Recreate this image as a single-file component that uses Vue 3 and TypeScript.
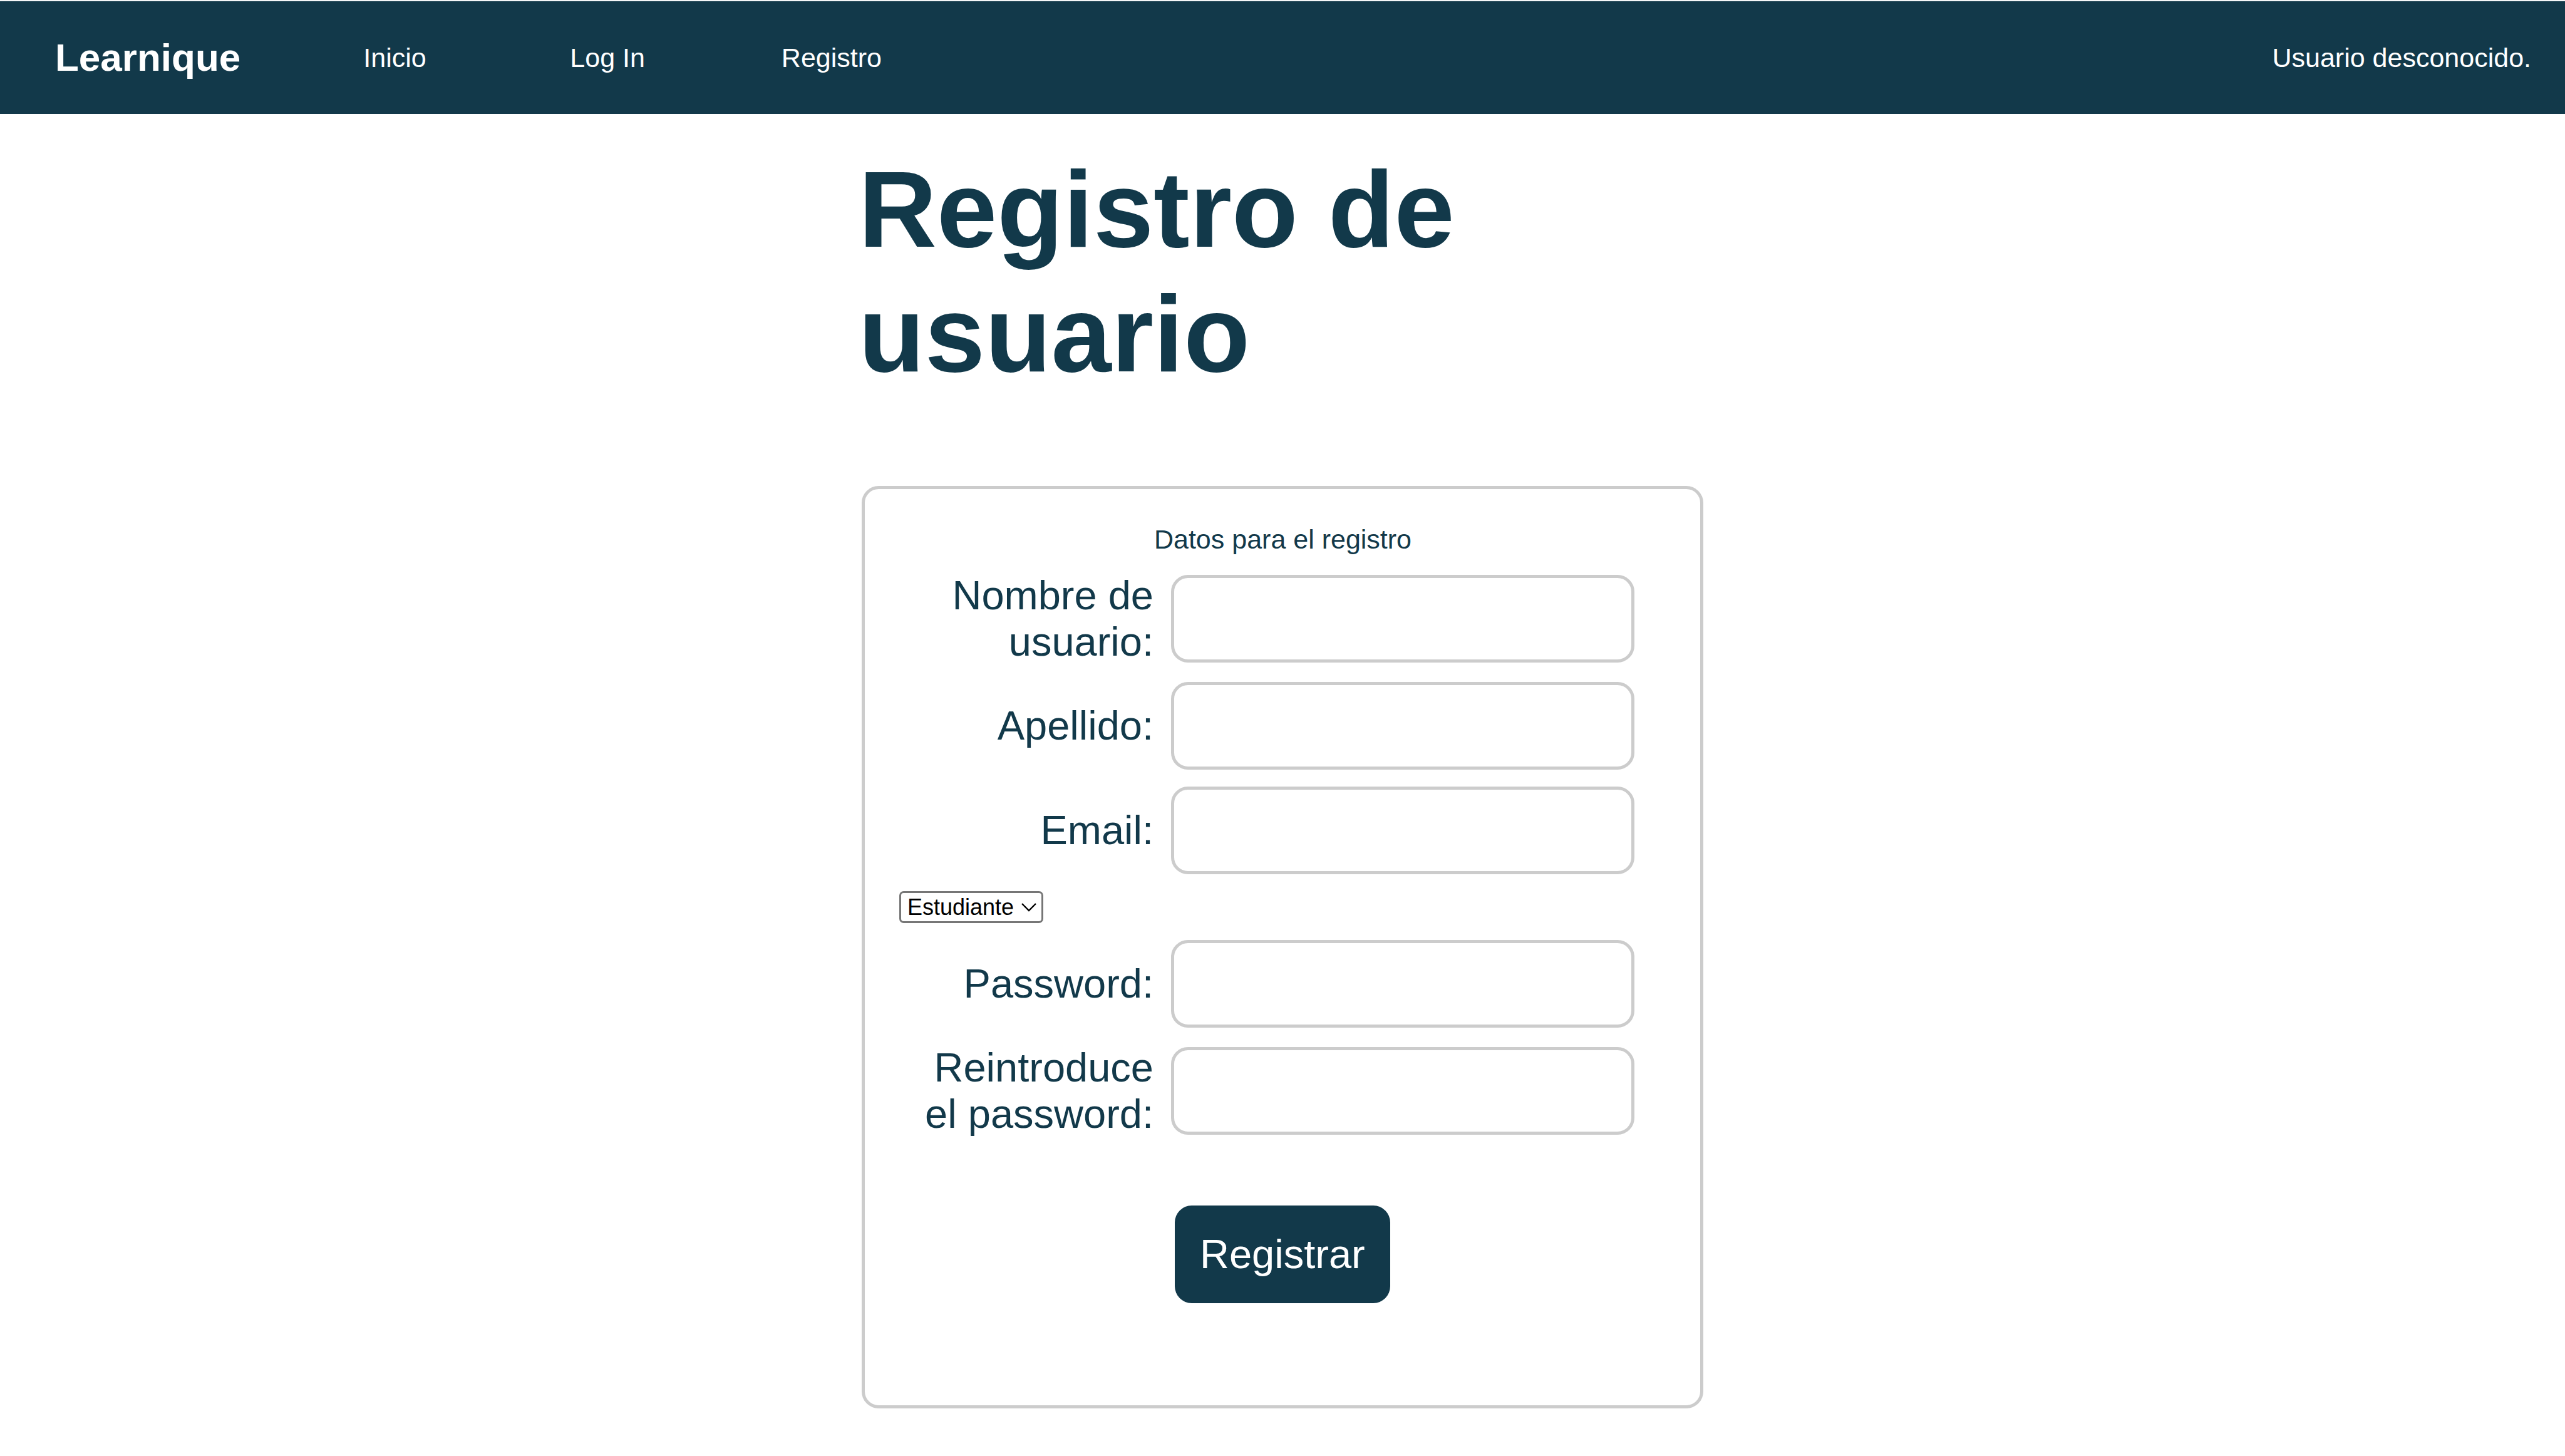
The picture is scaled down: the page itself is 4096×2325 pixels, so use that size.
<script setup lang="ts">
import { reactive } from 'vue'

interface NavLink {
  text: string
  href: string
}

interface Field {
  id: 'nombre' | 'apellido' | 'email' | 'password' | 'password2'
  label: string
  type: string
}

const links: NavLink[] = [
  { text: 'Inicio', href: '#inicio' },
  { text: 'Log In', href: '#login' },
  { text: 'Registro', href: '#registro' },
]

const personalFields: Field[] = [
  { id: 'nombre', label: 'Nombre de usuario:', type: 'text' },
  { id: 'apellido', label: 'Apellido:', type: 'text' },
  { id: 'email', label: 'Email:', type: 'email' },
]

const passwordFields: Field[] = [
  { id: 'password', label: 'Password:', type: 'password' },
  { id: 'password2', label: 'Reintroduce el password:', type: 'password' },
]

const form = reactive({
  nombre: '',
  apellido: '',
  email: '',
  rol: 'estudiante',
  password: '',
  password2: '',
})
</script>

<template>
  <div class="page">
    <header class="topbar">
      <span class="brand">Learnique</span>
      <nav class="nav">
        <a v-for="link in links" :key="link.href" class="nav-link" :href="link.href">{{ link.text }}</a>
      </nav>
      <span class="user">Usuario desconocido.</span>
    </header>

    <main class="content">
      <h1 class="title">Registro de usuario</h1>

      <form class="card" @submit.prevent>
        <p class="caption">Datos para el registro</p>

        <div v-for="field in personalFields" :key="field.id" class="row">
          <label class="label" :for="field.id">{{ field.label }}</label>
          <input :id="field.id" v-model="form[field.id]" class="input" :type="field.type" />
        </div>

        <div class="select-wrap">
          <select v-model="form.rol" class="select" aria-label="Rol">
            <option value="estudiante">Estudiante</option>
            <option value="profesor">Profesor</option>
          </select>
          <svg class="chevron" viewBox="0 0 24 14" aria-hidden="true">
            <path d="M1 1 L12 12 L23 1" fill="none" stroke="#000" stroke-width="2.4" />
          </svg>
        </div>

        <div v-for="field in passwordFields" :key="field.id" class="row">
          <label class="label" :for="field.id">{{ field.label }}</label>
          <input :id="field.id" v-model="form[field.id]" class="input" :type="field.type" />
        </div>

        <div class="row actions">
          <button class="submit" type="submit">Registrar</button>
        </div>
      </form>
    </main>
  </div>
</template>

<style>
body {
  background: #fff;
}
</style>

<style scoped>
.page {
  font-family: "Liberation Sans", Arial, sans-serif;
  color: #12394a;
}

.topbar {
  display: flex;
  align-items: center;
  box-sizing: border-box;
  height: 182px;
  padding: 0 54px 0 88px;
  border-top: 2px solid #f5f7f8;
  background: #12394a;
  color: #fff;
  font-size: 43px;
  line-height: 52px;
}

.brand {
  font-size: 62px;
  line-height: 74px;
  font-weight: bold;
}

.nav {
  display: flex;
  gap: 218px;
  margin-left: 196px;
}

.nav-link {
  min-width: 112px;
  color: inherit;
  text-decoration: none;
}

.user {
  margin-left: auto;
}

.content {
  max-width: 1354px;
  margin: 0 auto;
  padding: 53px 0 76px;
}

.title {
  margin: 0 0 143px;
  font-size: 173px;
  line-height: 199px;
  font-weight: bold;
}

.card {
  display: flex;
  flex-direction: column;
  gap: 27px;
  margin: 0 5px;
  padding: 54px 54px 163px 55px;
  border: 5px solid #ccc;
  border-radius: 27px;
}

.caption {
  margin: 0;
  font-size: 43px;
  line-height: 52px;
  text-align: center;
}

.row {
  display: grid;
  grid-template-columns: minmax(0, 406px) minmax(0, 740px);
  column-gap: 28px;
  align-items: center;
}

.label {
  font-size: 65px;
  line-height: 74px;
  text-align: right;
}

.input {
  box-sizing: border-box;
  width: 100%;
  height: 140px;
  padding: 0 27px;
  border: 5px solid #ccc;
  border-radius: 27px;
  background: #fff;
  color: inherit;
  font: inherit;
  font-size: 65px;
}

.select-wrap {
  position: relative;
  align-self: flex-start;
  display: flex;
}

.select {
  appearance: none;
  box-sizing: border-box;
  width: 230px;
  height: 51px;
  padding: 0 36px 0 10px;
  border: 3px solid #767676;
  border-radius: 7px;
  background: #fff;
  color: #000;
  font-family: inherit;
  font-size: 36px;
}

.chevron {
  position: absolute;
  top: 19px;
  right: 11px;
  width: 24px;
  height: 14px;
  pointer-events: none;
}

.actions {
  margin-top: 82px;
}

.submit {
  grid-column: 2;
  justify-self: start;
  margin: 0 6px;
  padding: 41px 40px;
  border: 0;
  border-radius: 27px;
  background: #12394a;
  color: #fff;
  font-family: inherit;
  font-size: 65px;
  line-height: 74px;
}
</style>
